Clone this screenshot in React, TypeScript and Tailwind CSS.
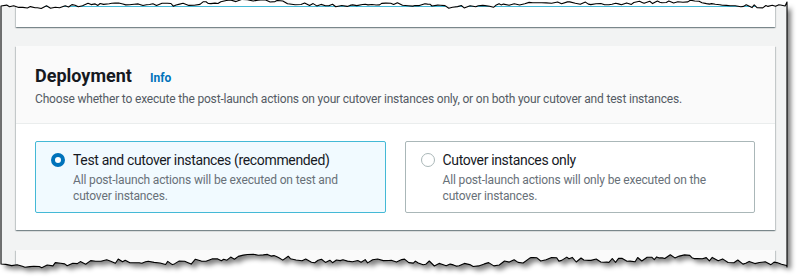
import React from 'react';

const W = 799;
const H = 280;
const LEFT = 1;
const RIGHT = 787;

// small deterministic noise so the torn edge looks the same each render
function makeRng(seed: number) {
  let s = seed;
  return () => {
    s = (s * 16807) % 2147483647;
    return s / 2147483647;
  };
}

function tornEdge(seed: number, base: number, amp: number, from: number, to: number) {
  const rnd = makeRng(seed);
  const pts: [number, number][] = [];
  let x = from;
  while (x <= to) {
    const wave = Math.sin(x / 23) * amp * 0.35 + Math.sin(x / 61 + seed) * amp * 0.45;
    const y = base + wave + (rnd() - 0.5) * amp * 0.8;
    pts.push([x, Math.round(y * 10) / 10]);
    x += 2 + rnd() * 4;
  }
  pts.push([to, base]);
  return pts;
}

function TornPaper() {
  const top = tornEdge(7, 4, 4, LEFT, RIGHT);
  const bottom = tornEdge(13, 261, 6, LEFT, RIGHT).reverse();
  top[0] = [LEFT, 6];
  top[top.length - 1] = [RIGHT, 2];
  bottom[0] = [RIGHT, 267];
  bottom[bottom.length - 1] = [LEFT, 264];

  const paper =
    'M' +
    top.map(([x, y]) => `${x},${y}`).join(' L') +
    ' L' +
    bottom.map(([x, y]) => `${x},${y}`).join(' L') +
    ' Z';
  const outside = `M0,0 H${W} V${H} H0 Z ` + paper;

  return (
    <svg className="absolute inset-0 pointer-events-none" width={W} height={H} viewBox={`0 0 ${W} ${H}`}>
      <defs>
        <clipPath id="outside">
          <path d={outside} clipRule="evenodd" />
        </clipPath>
        <filter id="blur" x="-5%" y="-5%" width="110%" height="110%">
          <feGaussianBlur stdDeviation="2.4" />
        </filter>
      </defs>
      <path d={outside} fill="#ffffff" fillRule="evenodd" />
      <g clipPath="url(#outside)">
        <path d={paper} fill="#000000" opacity="0.5" transform="translate(4,4)" filter="url(#blur)" />
      </g>
      <path d={paper} fill="none" stroke="#000000" strokeWidth="1.1" strokeLinejoin="round" />
    </svg>
  );
}

function RadioTile({
  checked,
  label,
  description,
}: {
  checked: boolean;
  label: string;
  description: string;
}) {
  return (
    <div
      className={`flex gap-[8px] pl-[15px] pr-[16px] pt-[8px] pb-[10px] h-[72px] rounded-[2px] border ${
        checked ? 'border-[#44b9d6] bg-[#f1faff]' : 'border-[#aab7b8] bg-white'
      }`}
    >
      <div className="h-[20px] flex items-center shrink-0">
        {checked ? (
          <span className="block w-[14px] h-[14px] rounded-full border-[4px] border-[#0073bb] bg-white" />
        ) : (
          <span className="block w-[14px] h-[14px] rounded-full border border-[#aab7b8] bg-white" />
        )}
      </div>
      <div>
        <div className="text-[14px] leading-[20px] tracking-[-0.35px] text-[#16191f]">{label}</div>
        <div className="text-[12px] leading-[16px] tracking-[-0.15px] text-[#687078] mt-[2px] pr-[20px]">
          {description}
        </div>
      </div>
    </div>
  );
}

const panelShadow =
  'shadow-[0_1px_1px_0_rgba(0,28,36,0.3),1px_1px_1px_0_rgba(0,28,36,0.15),-1px_1px_1px_0_rgba(0,28,36,0.15)]';

export default function App() {
  return (
    <div
      className="relative w-[799px] h-[280px] bg-white overflow-hidden"
      style={{ fontFamily: 'Roboto, "Noto Sans", sans-serif' }}
    >
      <div className="ml-[1px] w-[786px] h-[270px] bg-[#f2f3f3] pl-[15px] pr-[12px]">
        {/* previous panel, mostly cut off */}
        <div className={`h-[27px] bg-white ${panelShadow} px-[19px] pt-[6px]`}>
          <div className="h-[1px] bg-[#44b9d6]" />
        </div>

        {/* Deployment panel */}
        <div className={`mt-[19px] bg-white ${panelShadow}`}>
          <div className="h-[78px] bg-[#fafafa] border-b border-[#eaeded] px-[19px] pt-[18px]">
            <div className="flex items-baseline gap-[18px]">
              <h2 className="text-[18px] leading-[24px] font-bold text-[#16191f]">Deployment</h2>
              <span className="text-[12px] font-bold text-[#0073bb]">Info</span>
            </div>
            <p className="text-[12px] leading-[16px] tracking-[-0.18px] text-[#545b64] mt-[3px]">
              Choose whether to execute the post-launch actions on your cutover instances only, or on both your cutover
              and test instances.
            </p>
          </div>
          <div className="grid grid-cols-2 gap-[19px] px-[19px] pt-[17px] pb-[17px] pr-[20px]">
            <RadioTile
              checked
              label="Test and cutover instances (recommended)"
              description="All post-launch actions will be executed on test and cutover instances."
            />
            <RadioTile
              checked={false}
              label="Cutover instances only"
              description="All post-launch actions will only be executed on the cutover instances."
            />
          </div>
        </div>

        {/* next panel */}
        <div className={`mt-[20px] h-[40px] bg-[#fafafa] ${panelShadow}`} />
      </div>

      <TornPaper />
    </div>
  );
}
